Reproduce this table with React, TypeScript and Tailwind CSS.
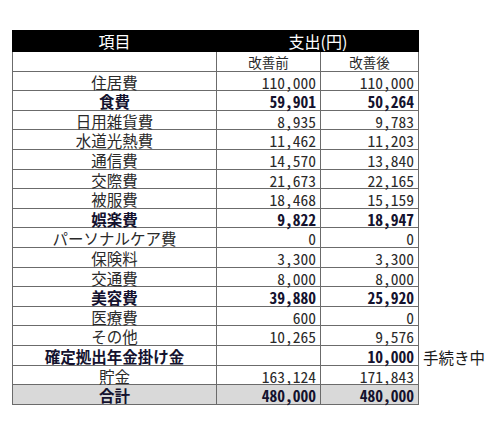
type Row = {
  label: string;
  before: string;
  after: string;
  bold?: boolean;
  total?: boolean;
  note?: string;
};

const rows: Row[] = [
  { label: "住居費", before: "110,000", after: "110,000" },
  { label: "食費", before: "59,901", after: "50,264", bold: true },
  { label: "日用雑貨費", before: "8,935", after: "9,783" },
  { label: "水道光熱費", before: "11,462", after: "11,203" },
  { label: "通信費", before: "14,570", after: "13,840" },
  { label: "交際費", before: "21,673", after: "22,165" },
  { label: "被服費", before: "18,468", after: "15,159" },
  { label: "娯楽費", before: "9,822", after: "18,947", bold: true },
  { label: "パーソナルケア費", before: "0", after: "0" },
  { label: "保険料", before: "3,300", after: "3,300" },
  { label: "交通費", before: "8,000", after: "8,000" },
  { label: "美容費", before: "39,880", after: "25,920", bold: true },
  { label: "医療費", before: "600", after: "0" },
  { label: "その他", before: "10,265", after: "9,576" },
  { label: "確定拠出年金掛け金", before: "", after: "10,000", bold: true, note: "手続き中" },
  { label: "貯金", before: "163,124", after: "171,843" },
  { label: "合計", before: "480,000", after: "480,000", bold: true, total: true },
];

const App = () => {
  return (
    <div className="min-h-[426px] w-[500px] bg-white pl-[12px] pt-[30px] font-['Noto_Sans_CJK_JP',sans-serif] text-[#2a2a2a]">
      <div className="grid h-[22px] w-[407px] grid-cols-[205px_202px] bg-black text-[16px] leading-none text-white">
        <div className="flex items-center justify-center">項目</div>
        <div className="flex items-center justify-center">支出(円)</div>
      </div>
      <div className="grid h-[19.6px] grid-cols-[205px_104px_98px] text-[13.5px] leading-none">
        <div className="border-b border-l border-r border-[#6b6b6b]"></div>
        <div className="flex items-end justify-center border-b border-r border-[#6b6b6b] pb-[1px]">改善前</div>
        <div className="flex items-end justify-center border-b border-r border-[#6b6b6b] pb-[1px]">改善後</div>
      </div>
      {rows.map((r) => {
        const tone = r.bold ? "font-bold text-[#14122e]" : "";
        const bg = r.total ? "bg-[#d9d9d9]" : "";
        return (
          <div
            key={r.label}
            className="grid h-[19.6px] grid-cols-[205px_104px_98px_auto] text-[15.5px] leading-none"
          >
            <div className={`flex items-end justify-center border-b border-l border-r border-[#6b6b6b] ${bg} ${tone}`}>
              {r.label}
            </div>
            <div className={`flex items-end justify-end border-b border-r border-[#6b6b6b] pr-[4px] [font-feature-settings:'hwid'] ${bg} ${tone}`}>
              {r.before}
            </div>
            <div className={`flex items-end justify-end border-b border-r border-[#6b6b6b] pr-[4px] [font-feature-settings:'hwid'] ${bg} ${tone}`}>
              {r.after}
            </div>
            <div className="flex items-end pl-[4px] text-[15.5px] text-[#1a1a1a]">{r.note}</div>
          </div>
        );
      })}
    </div>
  );
};

export default App;
